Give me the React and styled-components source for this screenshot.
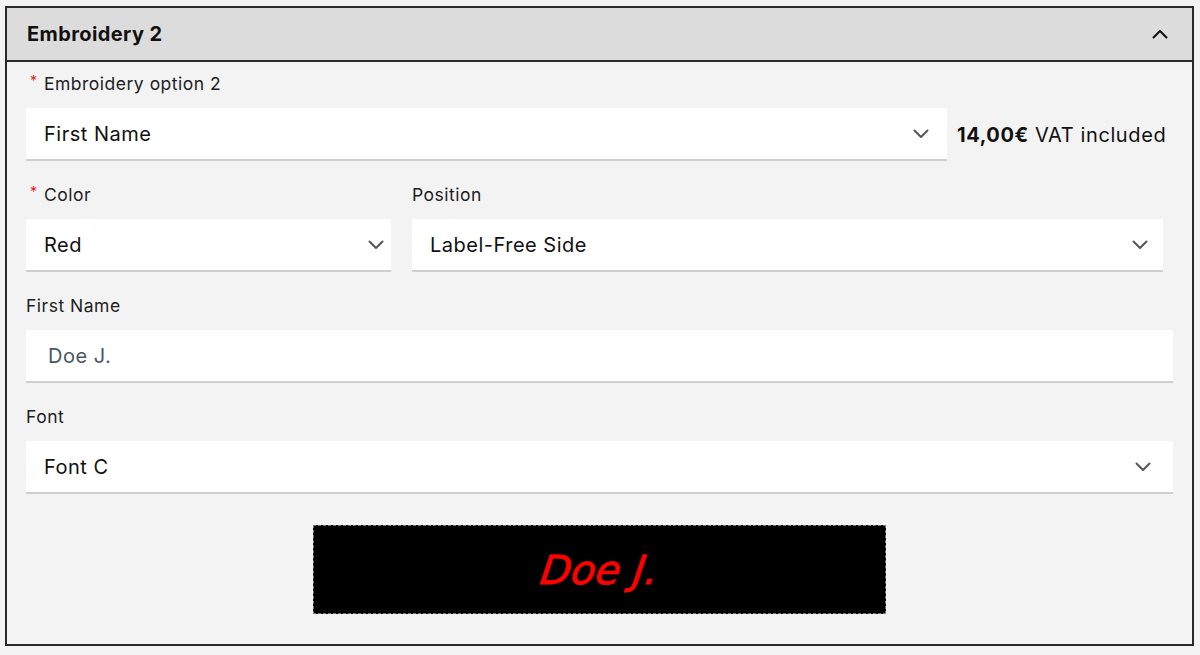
import React from 'react';
import styled, { createGlobalStyle } from "styled-components";

const GlobalStyle = createGlobalStyle`
  html, body {
    margin: 0;
    padding: 0;
    background: #f3f3f3;
    font-family: Inter, "Liberation Sans", sans-serif;
    color: #1a1a1a;
  }
`;

const Page = styled.div`
  padding: 6px 6px 0 5px;
`;

const Panel = styled.section`
  width: 1189px;
  box-sizing: border-box;
  border: 2px solid #2a2a2a;
  background: #f3f3f3;
`;

const Header = styled.div`
  height: 54px;
  box-sizing: border-box;
  display: flex;
  align-items: center;
  justify-content: space-between;
  padding: 0 24px 0 20px;
  background: #dcdcdc;
  border-bottom: 2px solid #2a2a2a;
  h2 {
    margin: 0;
    font-size: 20px;
    font-weight: 700;
    letter-spacing: 0.4px;
    color: #111;
  }
`;

const Body = styled.div`
  padding: 10px 19px 30px 19px;
  display: flex;
  flex-direction: column;
  gap: 22px;
`;

const Field = styled.div`
  display: flex;
  flex-direction: column;
  gap: 12px;
  width: ${(p) => p.width || "100%"};
`;

const Label = styled.label`
  height: 24px;
  line-height: 24px;
  font-size: 17.5px;
  letter-spacing: 0.5px;
  color: #1d1d24;
  display: flex;
  align-items: center;
  span {
    color: #e02020;
    font-size: 14px;
    width: 18px;
    padding-left: 4px;
    box-sizing: border-box;
    align-self: flex-start;
    line-height: 18px;
  }
`;

const Control = styled.div`
  height: 53px;
  box-sizing: border-box;
  background: #fff;
  border-bottom: 2px solid #cfcfcf;
  display: flex;
  align-items: center;
  justify-content: space-between;
  padding: 0 ${(p) => p.pr || "19px"} 0 ${(p) => (p.input ? "22px" : "18px")};
  font-size: 20px;
  letter-spacing: 0.5px;
  color: ${(p) => (p.input ? "#4a5568" : "#111")};
  width: ${(p) => p.width || "100%"};
`;

const Row = styled.div`
  display: flex;
  align-items: center;
  gap: 10px;
`;

const Columns = styled.div`
  display: flex;
  gap: 21px;
`;

const Price = styled.div`
  font-size: 20px;
  letter-spacing: 0.6px;
  color: #111;
  white-space: nowrap;
  b {
    font-weight: 700;
  }
`;

const Preview = styled.div`
  margin: 9px auto 0;
  width: 573px;
  height: 89px;
  box-sizing: border-box;
  background: #000;
  border: 1px dashed #777;
  display: flex;
  align-items: center;
  justify-content: center;
  color: #ff0000;
  span {
    display: inline-block;
    font-family: "DejaVu Sans", sans-serif;
    font-style: italic;
    font-size: 40px;
    -webkit-text-stroke: 0.8px #ff0000;
    transform: skewX(-8deg);
  }
`;

const Chevron = ({ up, color = "#555" }) => (
  <svg width="16" height="10" viewBox="0 0 16 10" fill="none">
    <polyline
      points={up ? "1.5,8.5 8,2 14.5,8.5" : "1.5,1.5 8,8 14.5,1.5"}
      stroke={color}
      strokeWidth="2"
      strokeLinecap="round"
      strokeLinejoin="round"
    />
  </svg>
);

const App = () => {
  return (
    <Page>
      <GlobalStyle />
      <Panel>
        <Header>
          <h2>Embroidery 2</h2>
          <Chevron up color="#111" />
        </Header>
        <Body>
          <Field>
            <Label><span>*</span>Embroidery option 2</Label>
            <Row>
              <Control width="921px" pr="18px">
                First Name
                <Chevron />
              </Control>
              <Price><b>14,00€</b> VAT included</Price>
            </Row>
          </Field>
          <Columns>
            <Field width="365px">
              <Label><span>*</span>Color</Label>
              <Control pr="7px">
                Red
                <Chevron />
              </Control>
            </Field>
            <Field width="751px">
              <Label>Position</Label>
              <Control pr="15px">
                Label-Free Side
                <Chevron />
              </Control>
            </Field>
          </Columns>
          <Field>
            <Label>First Name</Label>
            <Control input>Doe J.</Control>
          </Field>
          <Field>
            <Label>Font</Label>
            <Control pr="22px">
              Font C
              <Chevron />
            </Control>
          </Field>
          <Preview><span>Doe J.</span></Preview>
        </Body>
      </Panel>
    </Page>
  );
};

export default App;
